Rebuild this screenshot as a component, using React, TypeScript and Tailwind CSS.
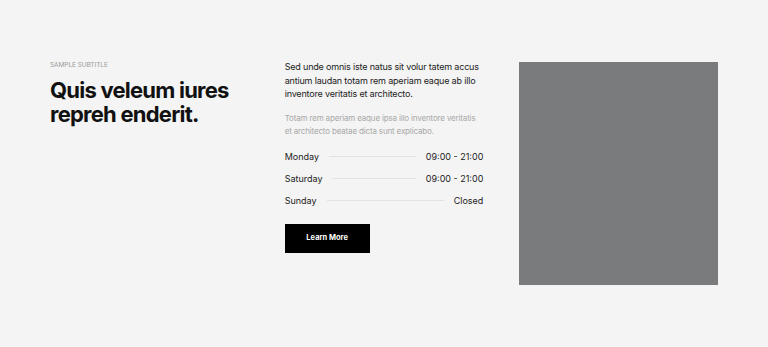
const hours = [
  { day: "Monday", time: "09:00 - 21:00" },
  { day: "Saturday", time: "09:00 - 21:00" },
  { day: "Sunday", time: "Closed" },
];

export default function App() {
  return (
    <section
      className="w-full h-[347px] bg-[#f4f4f4] px-[50px] py-[62px]"
      style={{ fontFamily: "Inter, 'Noto Sans', sans-serif" }}
    >
      <div className="grid grid-cols-3 gap-[36px] h-[223px]">
        <div className="flex flex-col">
          <p className="text-[6.5px] uppercase text-[#9a9a9a] leading-none tracking-[-0.01em]">
            Sample Subtitle
          </p>
          <h2 className="mt-[9px] text-[22px] font-bold leading-[24px] tracking-[-0.035em] text-[#111] whitespace-nowrap">
            Quis veleum iures
            <br />
            repreh enderit.
          </h2>
        </div>

        <div className="flex flex-col whitespace-nowrap">
          <p className="text-[9px] leading-[13.5px] text-[#222] -mt-[2px] tracking-[-0.02em]">
            Sed unde omnis iste natus sit volur tatem accus
            <br />
            antium laudan totam rem aperiam eaque ab illo
            <br />
            inventore veritatis et architecto.
          </p>
          <p className="mt-[11px] text-[8px] leading-[13px] text-[#a8a8a8] tracking-[-0.02em]">
            Totam rem aperiam eaque ipsa illo inventore veritatis
            <br />
            et architecto beatae dicta sunt explicabo.
          </p>
          <div className="mt-[13px] flex flex-col gap-[10px]">
            {hours.map((h) => (
              <div key={h.day} className="flex items-center gap-[10px] text-[9px] leading-[12px] text-[#222]">
                <span>{h.day}</span>
                <span className="flex-1 h-px bg-[#e2e2e2]" />
                <span>{h.time}</span>
              </div>
            ))}
          </div>
          <button className="mt-[17px] w-[85px] h-[29px] bg-black text-white text-[7.5px] font-bold">
            Learn More
          </button>
        </div>

        <div className="bg-[#7a7b7c] h-full" />
      </div>
    </section>
  );
}
